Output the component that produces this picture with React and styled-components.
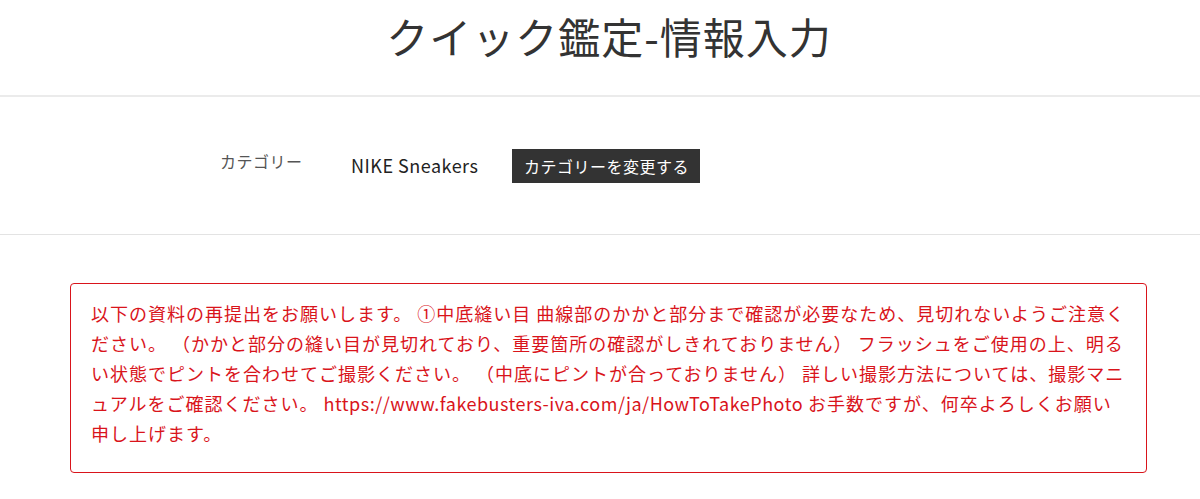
import React from "react";
import styled, { createGlobalStyle } from "styled-components";

const GlobalStyle = createGlobalStyle`
  body {
    margin: 0;
    background: #fff;
    font-family: "Noto Sans CJK JP", "Noto Sans", sans-serif;
  }
`;

const Page = styled.div`
  width: 1200px;
  display: flex;
  flex-direction: column;
`;

const Header = styled.header`
  height: 95px;
  display: flex;
  justify-content: center;
  align-items: flex-start;
  border-bottom: 2px solid #ebebeb;
`;

const Title = styled.h1`
  margin: 6px 0 0 18px;
  font-size: 42px;
  font-weight: 400;
  letter-spacing: 1px;
  line-height: 60px;
  color: #333;
`;

const CategorySection = styled.section`
  height: 137px;
  display: flex;
  align-items: center;
  padding-left: 220px;
  border-bottom: 1px solid #e3e3e3;
`;

const Label = styled.span`
  font-size: 16px;
  letter-spacing: 0.5px;
  color: #555;
  width: 131px;
  margin-top: -10px;
`;

const Value = styled.span`
  font-size: 18px;
  letter-spacing: 0.5px;
  color: #222;
  width: 161px;
  margin-top: -2px;
`;

const ChangeButton = styled.button`
  height: 34px;
  padding: 0 11px 0 12px;
  border: none;
  background: #333;
  color: #fff;
  font-family: inherit;
  font-size: 16px;
  letter-spacing: 0.5px;
`;

const Notice = styled.div`
  margin: 48px 53px 0 70px;
  padding: 14px 16px 24px 20px;
  border: 1.5px solid #d9141b;
  border-radius: 4px;
  color: #d9141b;
  font-size: 18px;
  letter-spacing: 1px;
  line-height: 30px;
`;

const Url = styled.span`
  letter-spacing: 0.5px;
`;

export default function App() {
  return (
    <Page>
      <GlobalStyle />
      <Header>
        <Title>クイック鑑定-情報入力</Title>
      </Header>
      <CategorySection>
        <Label>カテゴリー</Label>
        <Value>NIKE Sneakers</Value>
        <ChangeButton>カテゴリーを変更する</ChangeButton>
      </CategorySection>
      <Notice>
        以下の資料の再提出をお願いします。 ①中底縫い目 曲線部のかかと部分まで確認が必要なため、見切れないようご注意ください。 （かかと部分の縫い目が見切れており、重要箇所の確認がしきれておりません） フラッシュをご使用の上、明るい状態でピントを合わせてご撮影ください。 （中底にピントが合っておりません） 詳しい撮影方法については、撮影マニュアルをご確認ください。 <Url>https://www.fakebusters-iva.com/ja/HowToTakePhoto</Url> お手数ですが、何卒よろしくお願い申し上げます。
      </Notice>
    </Page>
  );
}
